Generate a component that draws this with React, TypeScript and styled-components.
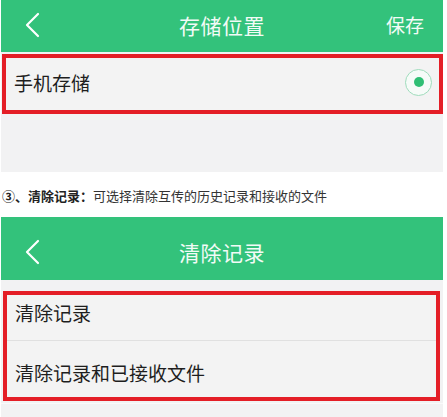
import styled, { createGlobalStyle } from 'styled-components';

const GlobalStyle = createGlobalStyle`
	html, body {
		margin: 0;
		padding: 0;
		background: #ffffff;
	}
	body {
		font-family: 'Noto Sans CJK SC', 'Noto Sans', sans-serif;
		width: 447px;
		height: 417px;
		overflow: hidden;
	}
`;

const BackIcon = () => (
	<svg width='16' height='26' viewBox='0 0 16 26' fill='none'>
		<path d='M14 2 L3 13 L14 24' stroke='#ffffff' strokeWidth='2.2' strokeLinecap='round' strokeLinejoin='round' />
	</svg>
);

const Radio = () => (
	<RadioOuter>
		<RadioDot />
	</RadioOuter>
);

const App = () => {
	return (
		<>
			<GlobalStyle />
			<Page>
				<Screen>
					<Header height={52} shift={-3}>
						<Back>
							<BackIcon />
						</Back>
						<Title>存储位置</Title>
						<Action>保存</Action>
					</Header>
					<Body pad={2} height={120}>
						<Highlight left={1} right={0}>
							<Row height={52} top={0} bottom={4}>
								<Label>手机存储</Label>
								<Radio />
							</Row>
						</Highlight>
					</Body>
				</Screen>

				<Caption>
					<b>③、清除记录：</b>可选择清除互传的历史记录和接收的文件
				</Caption>

				<Screen>
					<Header height={63} shift={6}>
						<Back>
							<BackIcon />
						</Back>
						<Title>清除记录</Title>
					</Header>
					<Body pad={11} height={137}>
						<Highlight left={2} right={3}>
							<Row height={46} top={0} bottom={10} divider>
								<Label>清除记录</Label>
							</Row>
							<Row height={56} top={7} bottom={0}>
								<Label>清除记录和已接收文件</Label>
							</Row>
						</Highlight>
						<Rule />
					</Body>
				</Screen>
			</Page>
		</>
	);
};

const Page = styled.div`
	display: flex;
	flex-direction: column;
	width: 447px;
`;

const Screen = styled.div`
	display: flex;
	flex-direction: column;
	width: 442px;
	margin-left: 1px;
`;

const Header = styled.div<{ height: number; shift: number }>`
	display: grid;
	grid-template-columns: 80px 1fr 80px;
	align-items: center;
	height: ${(p) => p.height}px;
	box-sizing: border-box;
	padding: ${(p) => (p.shift > 0 ? `${p.shift}px 0 0` : `0 0 ${-p.shift}px`)};
	background: #33c27b;
	color: #ffffff;
`;

const Back = styled.div`
	display: flex;
	align-items: center;
	padding-left: 23px;
	height: 100%;
`;

const Title = styled.div`
	text-align: center;
	font-size: 21px;
	letter-spacing: 0.5px;
	color: #f2fbf6;
`;

const Action = styled.div`
	text-align: right;
	padding-right: 19px;
	font-size: 19px;
	color: #f2fbf6;
`;

const Body = styled.div<{ pad: number; height: number }>`
	display: flex;
	flex-direction: column;
	height: ${(p) => p.height}px;
	padding-top: ${(p) => p.pad}px;
	box-sizing: border-box;
	background: #f2f2f3;
`;

const Highlight = styled.div<{ left: number; right: number }>`
	display: flex;
	flex-direction: column;
	margin: 0 ${(p) => p.right}px 0 ${(p) => p.left}px;
	border: 4px solid #e41e26;
	background: #f3f3f3;
`;

const Row = styled.div<{ height: number; top: number; bottom: number; divider?: boolean }>`
	display: flex;
	align-items: center;
	justify-content: space-between;
	height: ${(p) => p.height}px;
	padding: ${(p) => p.top}px 7px ${(p) => p.bottom}px 8px;
	box-sizing: border-box;
	border-bottom: ${(p) => (p.divider ? '1px solid #e0e0e0' : 'none')};
`;

const Label = styled.span`
	font-size: 19px;
	color: #1e1e1e;
`;

const RadioOuter = styled.div`
	display: flex;
	align-items: center;
	justify-content: center;
	width: 25px;
	height: 25px;
	border-radius: 50%;
	border: 1px solid #9fdcbc;
	background: #f6fbf8;
`;

const RadioDot = styled.div`
	width: 10px;
	height: 10px;
	border-radius: 50%;
	background: #2fbf74;
`;

const Caption = styled.div`
	display: flex;
	align-items: center;
	height: 45px;
	padding-left: 2px;
	padding-top: 2px;
	box-sizing: border-box;
	font-size: 13px;
	color: #333333;

	b {
		font-weight: 700;
		color: #222222;
	}
`;

const Rule = styled.div`
	height: 1px;
	margin-top: 2px;
	background: #fafafa;
`;

export default App;
